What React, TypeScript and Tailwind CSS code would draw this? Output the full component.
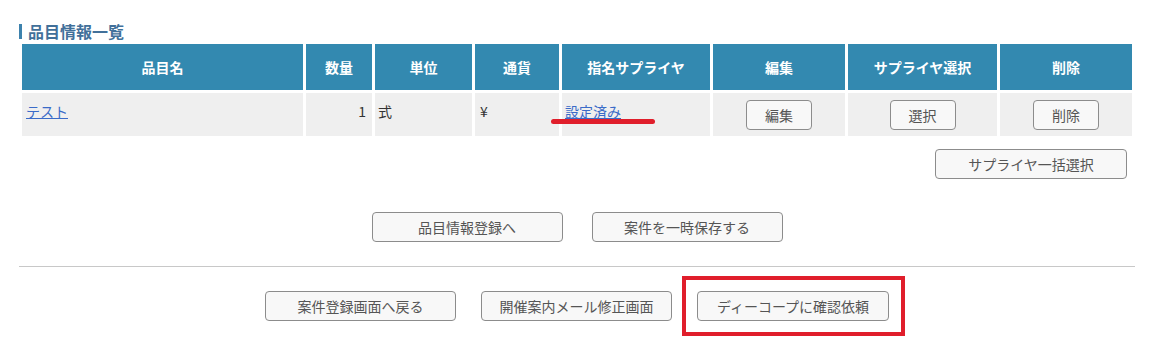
import React from "react";

const font = { fontFamily: '"Noto Sans CJK JP", "Noto Sans", sans-serif' };

function Btn({ children, className = "" }: { children: React.ReactNode; className?: string }) {
  return (
    <button
      type="button"
      className={
        "h-[30px] rounded-[4px] border border-[#8c8c8c] bg-[#f8f8f8] text-[14px] leading-none text-[#555555] " +
        className
      }
    >
      {children}
    </button>
  );
}

const headers = ["品目名", "数量", "単位", "通貨", "指名サプライヤ", "編集", "サプライヤ選択", "削除"];

export default function App() {
  return (
    <div className="w-[1168px] h-[350px] bg-white" style={font}>
      <div className="ml-[19px] w-[1116px] pt-[22px]">
        <div className="flex items-center h-[19px]">
          <span className="w-[3px] h-[15px] bg-[#3d82ad] mr-[6px]" />
          <h2 className="text-[16px] font-bold leading-none text-[#41709a] -mt-[1px]">品目情報一覧</h2>
        </div>
        <div className="grid grid-cols-[281px_66px_97px_84px_148px_132px_149px_132px] gap-[3px] p-[3px]">
          {headers.map((h) => (
            <div
              key={h}
              className="h-[46px] bg-[#3389b0] flex items-center justify-center text-white font-bold text-[14px]"
            >
              {h}
            </div>
          ))}
          <div className="h-[43px] bg-[#efefef] flex items-center px-[4px] pb-[6px] text-[14px]">
            <a href="#" className="text-[#3a6bc8] underline">テスト</a>
          </div>
          <div className="bg-[#efefef] flex items-center justify-end pr-[6px] pb-[6px] text-[14px] text-[#333]">1</div>
          <div className="bg-[#efefef] flex items-center px-[3px] pb-[6px] text-[14px] text-[#333]">式</div>
          <div className="bg-[#efefef] flex items-center px-[5px] pb-[6px] text-[14px] text-[#333]">¥</div>
          <div className="bg-[#efefef] flex items-center px-[3px] pb-[6px] text-[14px] relative">
            <a href="#" className="text-[#3a6bc8] underline">設定済み</a>
            <span className="absolute left-[-11px] top-[26px] w-[104px] h-[5px] rounded-full bg-[#e01e2b]" />
          </div>
          <div className="bg-[#efefef] flex items-center justify-center">
            <Btn className="w-[66px]">編集</Btn>
          </div>
          <div className="bg-[#efefef] flex items-center justify-center">
            <Btn className="w-[66px]">選択</Btn>
          </div>
          <div className="bg-[#efefef] flex items-center justify-center">
            <Btn className="w-[66px]">削除</Btn>
          </div>
        </div>
        <div className="flex justify-end pr-[8px] mt-[10px]">
          <Btn className="w-[192px] h-[29px]">サプライヤ一括選択</Btn>
        </div>
        <div className="flex justify-center gap-[29px] mt-[33px]">
          <Btn className="w-[191px]">品目情報登録へ</Btn>
          <Btn className="w-[191px]">案件を一時保存する</Btn>
        </div>
        <div className="mt-[24px] h-px bg-[#c8c8c8]" />
        <div className="flex justify-center gap-[25px] mt-[24px]">
          <Btn className="w-[191px]">案件登録画面へ戻る</Btn>
          <Btn className="w-[191px]">開催案内メール修正画面</Btn>
          <div className="relative">
            <Btn className="w-[192px]">ディーコープに確認依頼</Btn>
            <span className="absolute -left-[15px] -right-[16px] -top-[15px] -bottom-[15px] border-[4px] border-[#e01e2b] pointer-events-none" />
          </div>
        </div>
      </div>
    </div>
  );
}
